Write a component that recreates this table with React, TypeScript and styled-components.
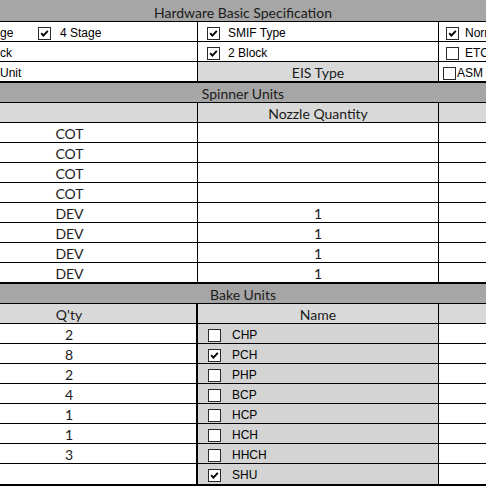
import React from "react";
import styled, { createGlobalStyle } from "styled-components";

const GlobalStyle = createGlobalStyle`
  html, body { margin: 0; padding: 0; background: #fff; }
  body { font-family: "Lato", "Open Sans", sans-serif; color: #111; }
`;

const Sheet = styled.div`
  width: 486px;
  height: 486px;
  overflow: hidden;
`;

const Band = styled.div<{ $h?: number }>`
  height: ${p => p.$h ?? 20}px;
  box-sizing: border-box;
  background: #a6a6a6;
  border-bottom: 1px solid #000;
  display: flex;
  align-items: flex-end;
  justify-content: center;
  font-size: 14px;
  line-height: 17px;
  color: #1a1a1a;
`;

const Row = styled.div<{ $h?: number; $bottom?: number }>`
  display: grid;
  grid-template-columns: 198px 241px 1fr;
  height: ${p => p.$h ?? 20}px;
  box-sizing: border-box;
  border-bottom: ${p => p.$bottom ?? 1}px solid #000;
`;

// Excel-style cell: text sits at the bottom, optionally centred
const Cell = styled.div<{ $bg?: string; $edge?: number; $center?: boolean; $padR?: number }>`
  box-sizing: border-box;
  background: ${p => p.$bg ?? "#fff"};
  border-right: ${p => p.$edge ?? 0}px solid #000;
  display: flex;
  align-items: flex-end;
  justify-content: ${p => (p.$center ? "center" : "flex-start")};
  padding-right: ${p => p.$padR ?? 0}px;
  font-size: 14px;
  line-height: 17px;
  color: #1a1a1a;
  overflow: hidden;
  white-space: nowrap;
`;

// cells holding form controls (classic Windows look)
const ControlCell = styled.div<{ $bg?: string; $edge?: number; $pad?: number }>`
  box-sizing: border-box;
  background: ${p => p.$bg ?? "#fff"};
  border-right: ${p => p.$edge ?? 0}px solid #000;
  display: flex;
  align-items: center;
  padding-left: ${p => p.$pad ?? 0}px;
  padding-top: 2px;
  font-family: "Liberation Sans", Arial, sans-serif;
  font-size: 12px;
  color: #000;
  overflow: hidden;
  white-space: nowrap;
`;

const CutLabel = styled.span`
  width: 38px;
  flex: none;
`;

const Item = styled.span<{ $gap?: number }>`
  display: inline-flex;
  align-items: center;
  gap: ${p => p.$gap ?? 9}px;
`;

const Box = styled.span`
  width: 13px;
  height: 13px;
  box-sizing: border-box;
  border: 1px solid #2a2a2a;
  background: #fff;
  display: inline-flex;
  flex: none;
  margin-top: 1px;
`;

const Check = ({ on }: { on: boolean }) => (
  <Box>
    {on ? (
      <svg width="11" height="11" viewBox="0 0 11 11">
        <path d="M2.2 5.2 L4.4 7.6 L8.8 2.8" fill="none" stroke="#000" strokeWidth="1.9" />
      </svg>
    ) : null}
  </Box>
);

const CheckItem = ({ on, label, gap }: { on: boolean; label: string; gap?: number }) => (
  <Item $gap={gap}>
    <Check on={on} />
    {label}
  </Item>
);

const spinner = [
  ["COT", ""], ["COT", ""], ["COT", ""], ["COT", ""],
  ["DEV", "1"], ["DEV", "1"], ["DEV", "1"], ["DEV", "1"],
];

const bake: [string, string, boolean][] = [
  ["2", "CHP", false],
  ["8", "PCH", true],
  ["2", "PHP", false],
  ["4", "BCP", false],
  ["1", "HCP", false],
  ["1", "HCH", false],
  ["3", "HHCH", false],
  ["", "SHU", true],
];

export default function App() {
  return (
    <>
      <GlobalStyle />
      <Sheet>
        <Band $h={22}>Hardware Basic Specification</Band>

        <Row>
          <ControlCell $edge={1}>
            <CutLabel>ge</CutLabel>
            <CheckItem on label="4 Stage" />
          </ControlCell>
          <ControlCell $edge={1} $pad={9}>
            <CheckItem on label="SMIF Type" gap={8} />
          </ControlCell>
          <ControlCell $pad={7}>
            <CheckItem on label="Normal" gap={6} />
          </ControlCell>
        </Row>
        <Row>
          <ControlCell $edge={1}>ck</ControlCell>
          <ControlCell $edge={1} $pad={9}>
            <CheckItem on label="2 Block" gap={8} />
          </ControlCell>
          <ControlCell $pad={7}>
            <CheckItem on={false} label="ETC" gap={6} />
          </ControlCell>
        </Row>
        <Row $h={21} $bottom={2}>
          <ControlCell $edge={1}>Unit</ControlCell>
          <Cell $edge={1} $bg="#d9d9d9" $center>EIS Type</Cell>
          <ControlCell $pad={4}>
            <CheckItem on={false} label="ASM" gap={1} />
          </ControlCell>
        </Row>

        <Band>Spinner Units</Band>
        <Row>
          <Cell $edge={1} $bg="#d9d9d9" />
          <Cell $edge={1} $bg="#d9d9d9" $center>Nozzle Quantity</Cell>
          <Cell $bg="#d9d9d9" />
        </Row>
        {spinner.map(([unit, qty], i) => (
          <Row key={i} $h={i === spinner.length - 1 ? 21 : 20} $bottom={i === spinner.length - 1 ? 2 : 1}>
            <Cell $edge={1} $center $padR={58}>{unit}</Cell>
            <Cell $edge={1} $center>{qty}</Cell>
            <Cell />
          </Row>
        ))}

        <Band>Bake Units</Band>
        <Row>
          <Cell $edge={2} $bg="#d9d9d9" $center $padR={58}>Q'ty</Cell>
          <Cell $edge={1} $bg="#d9d9d9" $center>Name</Cell>
          <Cell $bg="#d9d9d9" />
        </Row>
        {bake.map(([qty, name, on], i) => (
          <Row key={name} $h={i === bake.length - 1 ? 23 : 20} $bottom={i === bake.length - 1 ? 3 : 1}>
            <Cell $edge={2} $center $padR={58}>{qty}</Cell>
            <ControlCell $edge={1} $bg="#d4d4d4" $pad={10}>
              <CheckItem on={on} label={name} gap={11} />
            </ControlCell>
            <Cell />
          </Row>
        ))}
      </Sheet>
    </>
  );
}
